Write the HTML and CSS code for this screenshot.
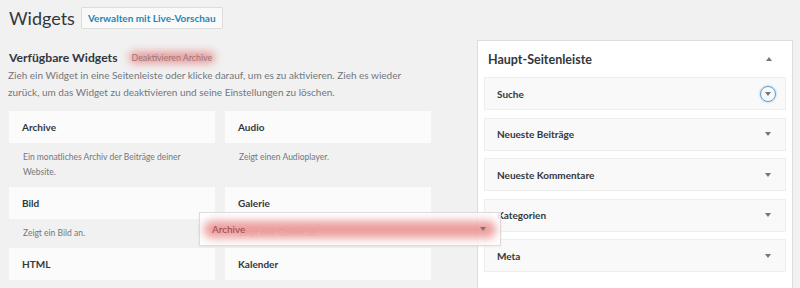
FILE: index.html
```html
<!DOCTYPE html>
<html lang="de">
<head>
    <meta charset="UTF-8">
    <title>Widgets</title>
    <link rel="stylesheet" href="styles.css">
</head>
<body>
    <div class="wrap">
        <div class="available">
            <div class="page-head">
                <h1>Widgets</h1>
                <a class="live-btn" href="#">Verwalten mit Live-Vorschau</a>
            </div>

            <div class="section-head">
                <h2>Verfügbare Widgets</h2>
                <span class="glow-label">Deaktivieren Archive</span>
            </div>
            <p class="intro">Zieh ein Widget in eine Seitenleiste oder klicke darauf, um es zu aktivieren. Zieh es wieder zurück, um das Widget zu deaktivieren und seine Einstellungen zu löschen.</p>

            <div class="widget-grid">
                <div class="widget">
                    <div class="widget-title">Archive</div>
                    <div class="widget-desc">Ein monatliches Archiv der Beiträge deiner Website.</div>
                </div>
                <div class="widget">
                    <div class="widget-title">Audio</div>
                    <div class="widget-desc">Zeigt einen Audioplayer.</div>
                </div>
                <div class="widget">
                    <div class="widget-title">Bild</div>
                    <div class="widget-desc">Zeigt ein Bild an.</div>
                </div>
                <div class="widget">
                    <div class="widget-title">Galerie</div>
                    <div class="widget-desc">Zeigt eine Galerie an.</div>
                </div>
                <div class="widget">
                    <div class="widget-title">HTML</div>
                </div>
                <div class="widget">
                    <div class="widget-title">Kalender</div>
                </div>
            </div>
        </div>

        <div class="sidebar">
            <div class="sidebar-head">
                <h3>Haupt-Seitenleiste</h3>
                <span class="arrow up"></span>
            </div>
            <div class="sidebar-widget">
                <span>Suche</span>
                <span class="arrow down focused"></span>
            </div>
            <div class="sidebar-widget">
                <span>Neueste Beiträge</span>
                <span class="arrow down"></span>
            </div>
            <div class="sidebar-widget">
                <span>Neueste Kommentare</span>
                <span class="arrow down"></span>
            </div>
            <div class="sidebar-widget">
                <span>Kategorien</span>
                <span class="arrow down"></span>
            </div>
            <div class="sidebar-widget">
                <span>Meta</span>
                <span class="arrow down"></span>
            </div>
        </div>
    </div>

    <!-- Widget beim Ziehen -->
    <div class="drag-helper">
        <span class="drag-title">Archive</span>
        <span class="arrow down"></span>
    </div>
</body>
</html>
```

FILE: styles.css
```css
html, body {
    height: 288px;
    overflow: hidden;
}

body {
    margin: 0;
    padding: 0;
    background-color: #f1f1f1;
    color: #32373c;
    font-family: 'Lato', 'Open Sans', sans-serif;
}

.wrap {
    display: flex;
    gap: 45px;
    padding: 7px 0 0 8px;
}

.available {
    width: 424px;
}

.page-head {
    display: flex;
    align-items: center;
    gap: 6px;
    height: 22px;
}

.page-head h1 {
    margin: 0;
    font-size: 18px;
    font-weight: 400;
    line-height: 22px;
    padding-left: 1px;
}

.live-btn {
    display: inline-block;
    padding: 0 6px;
    height: 20px;
    line-height: 20px;
    border: 1px solid #ddd;
    border-radius: 2px;
    background-color: #f9f9f9;
    color: #1f87b5;
    font-size: 10px;
    font-weight: 700;
    text-decoration: none;
}

.section-head {
    display: flex;
    align-items: center;
    gap: 14px;
    margin-top: 19px;
    height: 18px;
}

.section-head h2 {
    margin: 0;
    padding-left: 1px;
    font-size: 12.2px;
    font-weight: 700;
}

.glow-label {
    position: relative;
    font-size: 8.8px;
    color: #9a7676;
}

.glow-label::before,
.drag-helper::before {
    content: '';
    position: absolute;
    background-color: rgba(226, 92, 92, 0.6);
    filter: blur(4px);
    border-radius: 8px;
    z-index: -1;
}

.glow-label::before {
    left: -3px;
    right: -3px;
    top: 0;
    bottom: 0;
}

.intro {
    margin: 1px 0 0;
    font-size: 10px;
    line-height: 17px;
    color: #72777c;
}

.widget-grid {
    display: grid;
    grid-template-columns: 206px 206px;
    column-gap: 10px;
    margin-top: 10px;
    margin-left: 1px;
}

.widget-title {
    height: 32px;
    line-height: 32px;
    padding: 0 13px;
    background-color: #fbfbfb;
    font-size: 10px;
    font-weight: 700;
}

.widget-desc {
    padding: 7px 14px 7px;
    font-size: 8.5px;
    line-height: 15px;
    color: #72777c;
}

.sidebar {
    width: 316px;
    height: 260px;
    margin-top: 33px;
    background-color: #fff;
    border: 1px solid #ddd;
    box-sizing: border-box;
    padding: 0 6px;
}

.sidebar-head {
    display: flex;
    justify-content: space-between;
    align-items: center;
    height: 36px;
    padding: 0 14px 0 4px;
}

.sidebar-head h3 {
    margin: 0;
    font-size: 12.5px;
    font-weight: 700;
}

.sidebar-widget {
    display: flex;
    justify-content: space-between;
    align-items: center;
    height: 31px;
    margin-bottom: 7.5px;
    padding: 0 14px 0 12px;
    background-color: #f9f9f9;
    border: 1px solid #eee;
    font-size: 10px;
    font-weight: 700;
}

.arrow {
    display: inline-block;
    width: 0;
    height: 0;
    border-left: 3px solid transparent;
    border-right: 3px solid transparent;
}

.arrow.up {
    border-bottom: 4px solid #72777c;
}

.arrow.down {
    border-top: 4px solid #72777c;
}

.arrow.focused {
    position: relative;
}

.arrow.focused::after {
    content: '';
    position: absolute;
    left: -8px;
    top: -10px;
    width: 14px;
    height: 14px;
    border: 1px solid #5b9dd9;
    border-radius: 50%;
    box-shadow: 0 0 2px rgba(30, 140, 190, 0.6);
}

/* Widget beim Ziehen, über dem Inhalt */
.drag-helper {
    position: absolute;
    left: 199px;
    top: 212px;
    width: 302px;
    height: 34px;
    box-sizing: border-box;
    display: flex;
    justify-content: space-between;
    align-items: center;
    padding: 0 14px 0 12px;
    background-color: rgba(255, 255, 255, 0.85);
    border: 1px solid #ddd;
    box-shadow: 0 1px 2px rgba(0, 0, 0, 0.05);
    isolation: isolate;
}

.drag-helper::before {
    left: 4px;
    right: 4px;
    top: 8px;
    bottom: 7px;
}

.drag-title {
    font-size: 10px;
    color: #a04a48;
}
```
